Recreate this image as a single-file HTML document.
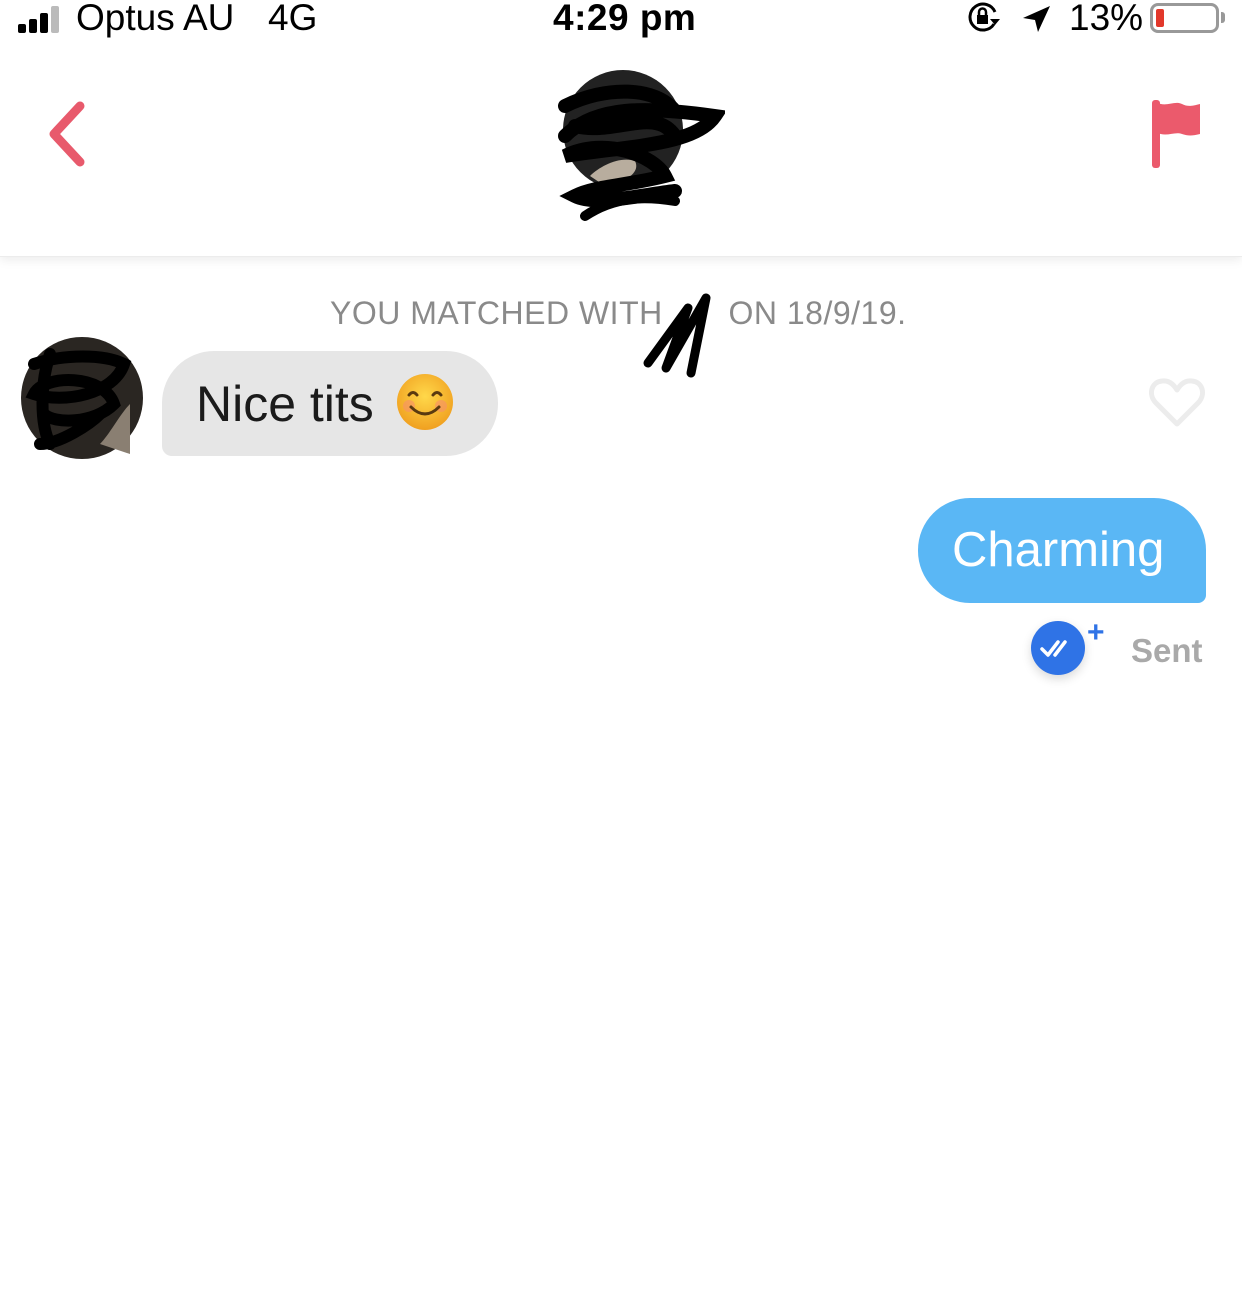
<!DOCTYPE html>
<html><head><meta charset="utf-8"><style>
*{margin:0;padding:0;box-sizing:border-box}
body{width:1242px;height:1304px;background:#fff;font-family:"Liberation Sans",sans-serif;position:relative;overflow:hidden}
.hdr{position:absolute;left:0;top:0;width:1242px;height:257px;background:#fff;box-shadow:0 3px 10px rgba(0,0,0,0.08);border-bottom:1px solid #ececec}
.abs{position:absolute}
</style></head><body>
<div class="hdr"></div>
<div class="abs" style="left:18px;top:4px;width:50px;height:30px">
 <div class="abs" style="left:0;top:20px;width:8px;height:9px;background:#000;border-radius:2px"></div>
 <div class="abs" style="left:11px;top:15px;width:8px;height:14px;background:#000;border-radius:2px"></div>
 <div class="abs" style="left:22px;top:9px;width:8px;height:20px;background:#000;border-radius:2px"></div>
 <div class="abs" style="left:33px;top:2px;width:8px;height:27px;background:#bbb;border-radius:2px"></div>
</div>
<div class="abs" style="left:76px;top:-3px;font-size:37px;color:#000">Optus AU</div>
<div class="abs" style="left:268px;top:-3px;font-size:37px;color:#000">4G</div>
<div class="abs" style="left:553px;top:-3px;font-size:37px;color:#000;font-weight:bold;letter-spacing:0.5px">4:29 pm</div>
<svg class="abs" style="left:966px;top:2px" width="36" height="32" viewBox="0 0 36 32"><path d="M28 22A13 13 0 1 1 29 10" fill="none" stroke="#000" stroke-width="3"/><path d="M24 17l5 6 5-6z" fill="#000"/><rect x="11" y="13" width="11" height="9" fill="#000"/><path d="M13 13v-3a3.5 3.5 0 0 1 7 0v3" fill="none" stroke="#000" stroke-width="2.5"/></svg>
<svg class="abs" style="left:1020px;top:4px" width="32" height="30" viewBox="0 0 32 30"><path d="M30 2L3 14l12 2 3 12z" fill="#000"/></svg>
<div class="abs" style="left:1069px;top:-3px;font-size:37px;color:#000">13%</div>
<div class="abs" style="left:1150px;top:3px;width:69px;height:30px;border:3px solid #999;border-radius:8px"><div style="position:absolute;left:3px;top:3px;width:8px;height:18px;background:#e2382b;border-radius:2px"></div></div>
<div class="abs" style="left:1221px;top:12px;width:4px;height:11px;background:#999;border-radius:0 3px 3px 0"></div>
<svg class="abs" style="left:40px;top:96px" width="56" height="76" viewBox="0 0 56 76"><path d="M40 10L14 38l26 28" fill="none" stroke="#e85a6c" stroke-width="9" stroke-linecap="round" stroke-linejoin="round"/></svg>
<svg class="abs" style="left:1148px;top:96px" width="56" height="76" viewBox="0 0 56 76"><rect x="4" y="4" width="8" height="68" rx="3" fill="#eb5a6c"/><path d="M8 6c10 6 18-2 26 2 6 3 10 2 18 0v30c-8 2-12 2-18 0-8-3-16 4-26-2z" fill="#eb5a6c"/></svg>
<svg class="abs" style="left:545px;top:66px" width="180" height="170" viewBox="0 0 180 170">
<circle cx="78" cy="64" r="60" fill="#222"/>
<path d="M45 110c10-10 30-20 45-15 5 10-5 20-30 25z" fill="#b8ad9e"/>
<path d="M20 70c30-30 80-30 150-20-20 30-90 30-150 40 40-20 90 0 100 20-40 10-70 10-90 20 20 10 60 0 100-5M20 40c40-20 90-20 110 5M30 60c40 10 80-20 100 10" fill="none" stroke="#000" stroke-width="14" stroke-linecap="round"/>
<path d="M40 150c30-20 60-20 90-15" fill="none" stroke="#000" stroke-width="10" stroke-linecap="round"/>
</svg>
<div class="abs" style="left:330px;top:295px;font-size:32px;color:#8a8a8a;letter-spacing:0.5px">YOU MATCHED WITH&nbsp;&nbsp;&nbsp;&nbsp;&nbsp;&nbsp; ON 18/9/19.</div>
<svg class="abs" style="left:640px;top:288px" width="80" height="92" viewBox="0 0 80 92"><path d="M8 75l40-55-22 60 40-70-15 75" fill="none" stroke="#000" stroke-width="9" stroke-linecap="round" stroke-linejoin="round"/></svg>
<svg class="abs" style="left:20px;top:334px" width="126" height="128" viewBox="0 0 126 128">
<circle cx="62" cy="64" r="61" fill="#2a2622"/>
<path d="M80 110c10-10 20-30 30-40v50z" fill="#8a7f72"/>
<path d="M14 30c30-10 70-10 90 0-10 30-60 40-90 30 10-20 70-20 80 10-20 20-60 20-70 10M20 110c20 0 50-20 60-30M30 20c-10 30-10 70 0 90" fill="none" stroke="#000" stroke-width="12" stroke-linecap="round"/>
</svg>
<div class="abs" style="left:162px;top:351px;width:336px;height:105px;background:#e6e6e6;border-radius:52px 52px 52px 10px"></div>
<div class="abs" style="left:196px;top:375px;font-size:50px;color:#1b1b1b">Nice tits</div>
<svg class="abs" style="left:396px;top:373px" width="58" height="58" viewBox="0 0 58 58"><defs><radialGradient id="g" cx="50%" cy="40%" r="60%"><stop offset="0" stop-color="#ffd84a"/><stop offset="1" stop-color="#f0a020"/></radialGradient></defs><circle cx="29" cy="29" r="28" fill="url(#g)"/><circle cx="13" cy="33" r="6" fill="#f7906a" opacity=".6"/><circle cx="45" cy="33" r="6" fill="#f7906a" opacity=".6"/><path d="M13 22q4-5 8 0M37 22q4-5 8 0" fill="none" stroke="#5a3a10" stroke-width="3" stroke-linecap="round"/><path d="M15 34q14 14 28 0" fill="none" stroke="#5a3a10" stroke-width="3" stroke-linecap="round"/></svg>
<svg class="abs" style="left:1148px;top:376px" width="58" height="54" viewBox="0 0 58 54"><path d="M29 48L8 27C0 19 3 6 14 5c7-1 12 4 15 9 3-5 8-10 15-9 11 1 14 14 6 22z" fill="none" stroke="#ececec" stroke-width="5" stroke-linejoin="round"/></svg>
<div class="abs" style="left:918px;top:498px;width:288px;height:105px;background:#5ab7f5;border-radius:52px 52px 8px 52px"></div>
<div class="abs" style="left:952px;top:522px;font-size:49px;color:#fff">Charming</div>
<div class="abs" style="left:1031px;top:621px;width:54px;height:54px;border-radius:50%;background:#2f73e6;box-shadow:0 4px 10px rgba(0,0,0,0.15)"></div>
<svg class="abs" style="left:1031px;top:621px" width="54" height="54" viewBox="0 0 54 54"><path d="M11 28l6 6 10-13M24 34l10-13" fill="none" stroke="#fff" stroke-width="3.5" stroke-linecap="round" stroke-linejoin="round"/></svg>
<div class="abs" style="left:1087px;top:616px;font-size:30px;color:#2f73e6;font-weight:bold">+</div>
<div class="abs" style="left:1131px;top:632px;font-size:33px;color:#a9a9a9;font-weight:bold">Sent</div>
</body></html>
